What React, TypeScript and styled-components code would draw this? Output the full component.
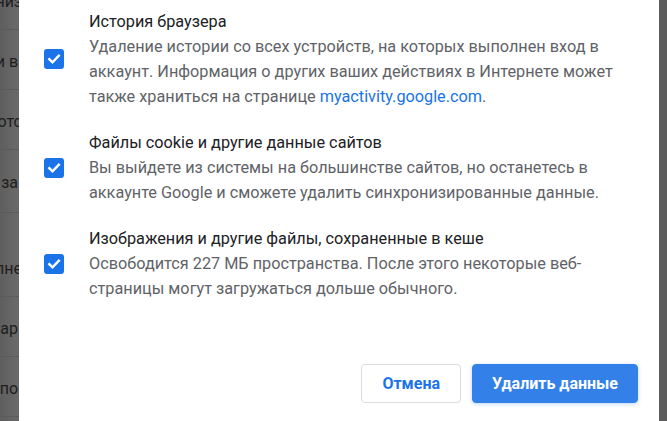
import React from 'react';
import styled, { createGlobalStyle } from 'styled-components';

const Global = createGlobalStyle`
  html, body { margin: 0; padding: 0; }
  body {
    width: 667px;
    height: 421px;
    overflow: hidden;
    background: #5f5f5f;
    font-family: Roboto, "Noto Sans", "Liberation Sans", sans-serif;
  }
`;

const Screen = styled.div`
  display: flex;
  width: 667px;
  height: 421px;
  overflow: hidden;
`;

const PageEdge = styled.div`
  width: 19px;
  flex: none;
  overflow: hidden;
  background: linear-gradient(90deg, #5e5e5e 0%, #666 60%, #6a6a6a 100%);
`;

const EdgeInner = styled.div`
  width: 22px;
  margin-top: -30px;
  display: flex;
  flex-direction: column;
`;

const EdgeRow = styled.div<{ $h: number; $bottom?: boolean }>`
  flex: none;
  box-sizing: border-box;
  height: ${(p) => p.$h}px;
  display: flex;
  justify-content: flex-end;
  align-items: ${(p) => (p.$bottom ? 'flex-end' : 'center')};
  padding: ${(p) => (p.$bottom ? '0 0 17px' : '4px 0 0')};
  border-bottom: 1px solid #5b5b5b;
  font-size: 16px;
  line-height: 20px;
  color: #1e1e1e;
  white-space: pre;
`;

const RightEdge = styled.div`
  width: 8px;
  flex: none;
  background: #5c5c5c;
`;

const Dialog = styled.section`
  flex: 1;
  background: #fff;
  display: flex;
  flex-direction: column;
  padding: 9px 21px 0 25px;
`;

const Options = styled.div`
  display: flex;
  flex-direction: column;
  gap: 21px;
`;

const Option = styled.label`
  display: flex;
  align-items: center;
  gap: 25px;
`;

const Box = styled.span`
  width: 20px;
  height: 20px;
  flex: none;
  border-radius: 3px;
  background: #1a73e8;
  display: flex;
  align-items: center;
  justify-content: center;
`;

const OptionText = styled.div`
  display: flex;
  flex-direction: column;
  font-size: 16.25px;
  line-height: 25px;
`;

const Title = styled.div`
  color: #202124;
`;

const Desc = styled.div`
  color: #5f6368;
`;

const Link = styled.a`
  color: #1a73e8;
  text-decoration: none;
`;

const Footer = styled.div`
  display: flex;
  justify-content: flex-end;
  gap: 11px;
  margin-top: 63px;
`;

const Button = styled.button<{ $primary?: boolean }>`
  height: 39px;
  box-sizing: border-box;
  padding: 0 ${(p) => (p.$primary ? 19 : 20)}px;
  border-radius: 4px;
  font-family: Roboto, "Noto Sans", sans-serif;
  font-size: 16px;
  font-weight: 700;
  cursor: pointer;
  border: 1px solid ${(p) => (p.$primary ? '#3381e8' : '#dadce0')};
  background: ${(p) => (p.$primary ? '#3381e8' : '#fff')};
  color: ${(p) => (p.$primary ? '#fff' : '#1a73e8')};
  box-shadow: ${(p) => (p.$primary ? '0 1px 4px rgba(26,115,232,0.3)' : 'none')};
`;

const Check = () => (
  <svg width="14" height="14" viewBox="0 0 14 14" aria-hidden="true">
    <path d="M2.3 7.2 L5.5 10.3 L11.8 3.8" fill="none" stroke="#fff" strokeWidth="2.4" strokeLinecap="square" />
  </svg>
);

const edgeRows: { h: number; t: string; bottom?: boolean }[] = [
  { h: 60, t: 'низ' },
  { h: 60, t: 'и в ' },
  { h: 60, t: 'отс' },
  { h: 63, t: ' за ' },
  { h: 84, t: 'лне', bottom: true },
  { h: 60, t: 'ар ' },
  { h: 60, t: 'по ' },
  { h: 60, t: '' },
];

const options = [
  {
    title: 'История браузера',
    desc: (
      <>
        Удаление истории со всех устройств, на которых выполнен вход в аккаунт. Информация о других
        ваших действиях в Интернете может также храниться на странице{' '}
        <Link href="#">myactivity.google.com</Link>.
      </>
    ),
  },
  {
    title: 'Файлы cookie и другие данные сайтов',
    desc: 'Вы выйдете из системы на большинстве сайтов, но останетесь в аккаунте Google и сможете удалить синхронизированные данные.',
  },
  {
    title: 'Изображения и другие файлы, сохраненные в кеше',
    desc: 'Освободится 227 МБ пространства. После этого некоторые веб-страницы могут загружаться дольше обычного.',
  },
];

export default function App() {
  return (
    <>
      <Global />
      <Screen>
        <PageEdge>
          <EdgeInner>
            {edgeRows.map((r, i) => (
              <EdgeRow key={i} $h={r.h} $bottom={r.bottom}>
                {r.t}
              </EdgeRow>
            ))}
          </EdgeInner>
        </PageEdge>
        <Dialog>
          <Options>
            {options.map((o) => (
              <Option key={o.title}>
                <Box>
                  <Check />
                </Box>
                <OptionText>
                  <Title>{o.title}</Title>
                  <Desc>{o.desc}</Desc>
                </OptionText>
              </Option>
            ))}
          </Options>
          <Footer>
            <Button>Отмена</Button>
            <Button $primary>Удалить данные</Button>
          </Footer>
        </Dialog>
        <RightEdge />
      </Screen>
    </>
  );
}
